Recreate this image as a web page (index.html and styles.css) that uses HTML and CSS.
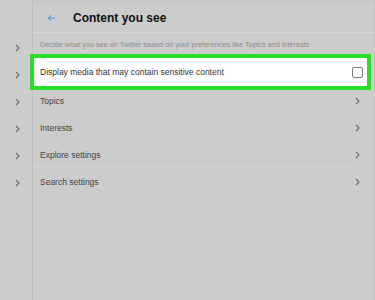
FILE: index.html
```html
<!DOCTYPE html>
<html lang="en">
<head>
    <meta charset="UTF-8">
    <title>Content you see</title>
    <link rel="stylesheet" href="styles.css">
</head>
<body>
    <div class="page">
        <nav class="sidebar">
            <div class="side-item"><svg class="chev" viewBox="0 0 5 8"><path d="M1 1 L4 4 L1 7"/></svg></div>
            <div class="side-item"><svg class="chev" viewBox="0 0 5 8"><path d="M1 1 L4 4 L1 7"/></svg></div>
            <div class="side-item"><svg class="chev" viewBox="0 0 5 8"><path d="M1 1 L4 4 L1 7"/></svg></div>
            <div class="side-item"><svg class="chev" viewBox="0 0 5 8"><path d="M1 1 L4 4 L1 7"/></svg></div>
            <div class="side-item"><svg class="chev" viewBox="0 0 5 8"><path d="M1 1 L4 4 L1 7"/></svg></div>
            <div class="side-item"><svg class="chev" viewBox="0 0 5 8"><path d="M1 1 L4 4 L1 7"/></svg></div>
        </nav>

        <main class="content">
            <header class="head">
                <svg class="back" viewBox="0 0 10 9"><path d="M9 4.5 H1.5 M4.5 1.5 L1.5 4.5 L4.5 7.5"/></svg>
                <h1>Content you see</h1>
            </header>

            <p class="subtitle">Decide what you see on Twitter based on your preferences like Topics and interests</p>

            <div class="highlight">
                <span>Display media that may contain sensitive content</span>
                <span class="checkbox"></span>
            </div>

            <ul class="rows">
                <li><span>Topics</span><svg class="chev" viewBox="0 0 5 8"><path d="M1 1 L4 4 L1 7"/></svg></li>
                <li><span>Interests</span><svg class="chev" viewBox="0 0 5 8"><path d="M1 1 L4 4 L1 7"/></svg></li>
                <li class="ruled"><span>Explore settings</span><svg class="chev" viewBox="0 0 5 8"><path d="M1 1 L4 4 L1 7"/></svg></li>
                <li><span>Search settings</span><svg class="chev" viewBox="0 0 5 8"><path d="M1 1 L4 4 L1 7"/></svg></li>
            </ul>
        </main>
    </div>
</body>
</html>
```
FILE: styles.css
```css
body { margin: 0; background-color: #cccccc; font-family: "Liberation Sans", Arial, sans-serif; color: #444; }
.page { display: flex; height: 300px; overflow: hidden; }
.sidebar { width: 33px; padding-top: 34px; border-right: 1px solid #bdbdbd; box-sizing: border-box; flex: none; }
.side-item { height: 27px; display: flex; align-items: center; padding-left: 15px; }
.chev { width: 5px; height: 8px; fill: none; stroke: #6a6a6a; stroke-width: 1.1; }
.content { flex: 1; min-width: 0; border-right: 1px solid #c4c4c4; }
.head { height: 33px; display: flex; align-items: center; border-bottom: 1px solid #d6d6d6; border-top: 3px solid #c6c6c6; box-sizing: border-box; }
.back { width: 9px; height: 8px; margin-left: 14px; fill: none; stroke: #5b9fd6; stroke-width: 1.3; }
h1 { margin: 0 0 0 17px; font-size: 12px; font-weight: 700; color: #111; }
.subtitle { margin: 0; padding: 3px 0 0 7px; height: 21px; line-height: 18px; font-size: 7.3px; color: #8c8c8c; white-space: nowrap; box-sizing: border-box; }
.highlight { display: flex; align-items: center; justify-content: space-between; height: 36px; margin: 0 3px 0 -3px; padding: 0 4px 0 6px; border: 4px solid #27e027; background-color: #fff; box-sizing: border-box; font-size: 8.5px; color: #333; }
.checkbox { width: 11px; height: 11px; border: 1.5px solid #7a7a7a; border-radius: 2px; box-sizing: border-box; }
.rows { list-style: none; margin: -3px 0 0; padding: 0; }
.rows li { height: 27px; display: flex; align-items: center; justify-content: space-between; padding: 0 14px 0 7px; font-size: 8.5px; }
.rows li.ruled { background: linear-gradient(#d2d2d2, #d2d2d2) no-repeat left bottom / calc(100% - 20px) 1px; }
```
